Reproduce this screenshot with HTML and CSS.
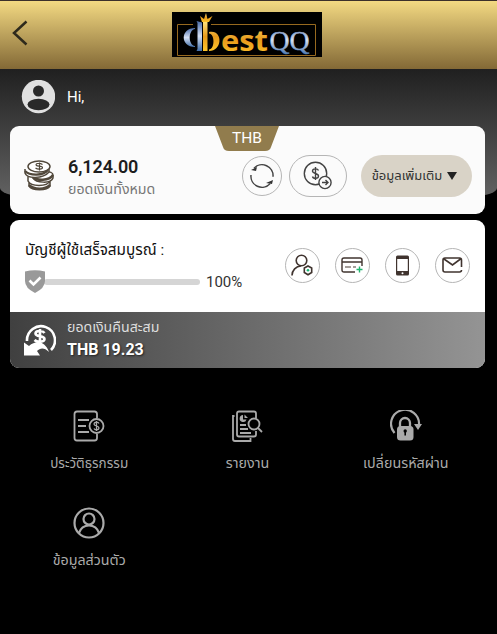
FILE: index.html
```html
<!DOCTYPE html>
<html lang="th">
<head>
<meta charset="utf-8">
<title>BestQQ</title>
<link rel="stylesheet" href="styles.css">
</head>
<body>
<header class="topbar">
  <svg class="back" width="16" height="26" viewBox="0 0 16 26"><path d="M14.500 1.500 2 13l12.500 11.500" fill="none" stroke="#2e2a1c" stroke-width="2.500"/></svg>
  <svg class="logo" width="150" height="45" viewBox="0 0 150 45">
    <defs>
      <linearGradient id="gold" x1="0" y1="0" x2="0" y2="1"><stop offset="0" stop-color="#ffe27a"/><stop offset=".5" stop-color="#e79a1c"/><stop offset="1" stop-color="#ffc62b"/></linearGradient>
      <linearGradient id="blue" x1="0" y1="0" x2="0" y2="1"><stop offset="0" stop-color="#4769a6"/><stop offset=".5" stop-color="#d5e0f5"/><stop offset="1" stop-color="#416fa9"/></linearGradient>
    </defs>
    <path fill="#000" d="M0 0h150v45H0z"/>
    <path d="M21 12.500H5.500v31h138v-31H39" fill="none" stroke="#97691f"/>
    <path d="M23 16c-15 0-15 19 0 19v-1c-7-1-7-16 0-17z" fill="url(#blue)"/>
    <path d="M24.500 9l5.500 1.500V39h-5.500l1-2V11z" fill="url(#blue)"/>
    <path d="M31 10h4.500v29H31zM37 20c14-3 14 19 0 19v-1.500c6 0 6-16 0-16z" fill="url(#gold)"/>
    <path d="m30 10-2-6 4 3 2-6 1.500 6 5-3-3.500 6z" fill="url(#gold)"/>
    <text class="logo-best" x="49" y="38.500" textLength="47" lengthAdjust="spacingAndGlyphs" fill="url(#gold)">est</text>
    <text class="logo-qq" x="97.500" y="37.500" textLength="40" lengthAdjust="spacingAndGlyphs" fill="url(#blue)" stroke="url(#blue)" stroke-width=".5">QQ</text>
  </svg>
</header>
<section class="hero">
  <svg width="34" height="34" viewBox="0 0 34 34"><circle cx="17.500" cy="16.500" r="16.700" fill="#e0e0e0"/><circle cx="17.500" cy="11" r="5.500" fill="#292929"/><ellipse cx="17.500" cy="24.500" rx="11" ry="5.700" fill="#292929"/></svg>
  <span>Hi,</span>
</section>
<main>
  <section class="card balance">
    <span class="currency">THB</span>
    <svg class="coins" width="31" height="31" viewBox="0 0 31 31" fill="#fff" stroke="#51483b" stroke-width="1.500">
      <path d="M5 22v4c3 5 18 5 21 0v-4M4 17v4c3 6 19 6 22 0v-5"/>
      <path d="M5 25c5 5 16 5 21 0" stroke-width="2.500" fill="none"/>
      <path d="M9 14c1-4 20-4 20 1v3c-2 6-17 5-20 0z"/><path d="M9 17c4 4 16 4 20-2" stroke-width="2.500"/>
      <path d="M1 9v4c2 6 18 6 24-1V7"/><path d="M1 11c5 5 18 5 23-1" fill="none" stroke-width="2.300"/>
      <ellipse cx="15" cy="6.500" rx="11" ry="5.500"/><path d="M18.500 4.500c-3-2-8-1-6 1 1 1 6 0 6 2s-5 2-7 .5M15.500 2.500v8" stroke-width="1.200" fill="none"/>
    </svg>
    <div class="amounts"><strong>6,124.00</strong><span>ยอดเงินทั้งหมด</span></div>
    <div class="round refresh"><svg width="26" height="26" viewBox="0 0 26 26"><path d="M5 5.300a11 11 0 0 1 19 8.500M21 20.700A11 11 0 0 1 2 12" fill="none" stroke="#444" stroke-width="1.500"/><path d="m2 7 6-3-1 4zm22 10-1 4-6-1z" fill="#333"/></svg></div>
    <div class="round transfer"><svg width="30" height="30" viewBox="0 0 30 30" fill="none" stroke="#444" stroke-width="1.400"><circle cx="12.500" cy="12.500" r="11.200"/><path d="M15.500 9.500c-1-2.500-6-2-6 .5 0 3 6 2 6 5 0 3-5.500 3-6 .5M12.500 6v13"/><circle cx="22" cy="21.500" r="6.100" fill="#fbfbfb"/><path d="M19 21.500h6m-2.500-2.500 2.500 2.500-2.500 2.500"/></svg></div>
    <button class="more"><span>ข้อมูลเพิ่มเติม</span><i></i></button>
  </section>
  <section class="card profile">
    <div class="complete">
      <div class="progress-col">
        <p>บัญชีผู้ใช้เสร็จสมบูรณ์ :</p>
        <div class="progress">
          <svg width="20" height="23" viewBox="0 0 20 23"><path d="M0 1.500Q10-1 20 1.500V11q0 7-10 12Q0 18 0 11z" fill="#999"/><path d="m4.500 10.500 4 4 7-7" fill="none" stroke="#fff" stroke-width="2.600"/></svg>
          <div class="track"></div><span>100%</span>
        </div>
      </div>
      <div class="actions">
        <div class="round small"><svg width="23" height="23" viewBox="0 0 23 23" fill="none" stroke="#40342f" stroke-width="1.600"><circle cx="10.500" cy="6.500" r="5.300"/><path d="M1 21.500c0-5 4-9.500 9-9.500"/><path d="m17 12 3.700 2v4.500L17 20.700l-3.700-2.200V14z"/><circle cx="17" cy="16.300" r="1.300" fill="#19b575" stroke="none"/></svg></div>
        <div class="round small"><svg width="23" height="23" viewBox="0 0 23 23" fill="none" stroke="#40342f" stroke-width="1.400"><path d="M14 18H3q-2 0-2-2V6q0-2 2-2h16q2 0 2 2v6M1 8h20"/><path d="M4 13h6m2 0h3" stroke="#887f79"/><path d="M18.500 12.500v6m-3-3h6" stroke="#20b66f"/></svg></div>
        <div class="round small"><svg width="23" height="23" viewBox="0 0 23 23"><rect x="5" y="1.500" width="13" height="20" rx="1.500" fill="#40342f"/><path d="M6.200 5h10.600v12H6.200z" fill="#fff"/><circle cx="11.500" cy="19.200" r="1" fill="#fff"/></svg></div>
        <div class="round small"><svg width="23" height="23" viewBox="0 0 23 23" fill="none" stroke="#40342f" stroke-width="1.600"><path d="M20.500 13V6q0-2-2-2H4Q2 4 2 6v10q0 2 2 2h14.500q2 0 2-2M3 5l8.500 6L19.500 5"/></svg></div>
      </div>
    </div>
    <div class="rebate">
      <svg width="32" height="32" viewBox="0 0 32 32"><path d="M3 17A14 14 0 1 1 27 26" fill="none" stroke="#fff" stroke-width="2.600"/><path d="M20.500 9c-2-3-9-2.500-9 .5 0 4 9 1.500 9 5.500 0 3-7 4-10 1M16 5v13" fill="none" stroke="#fff" stroke-width="2.600"/><path d="M0 18.500 5 22c7-6 16-5 20 6-5-5-9-4-12-1l3 4.500H0z" fill="#fff"/></svg>
      <div><span>ยอดเงินคืนสะสม</span><strong>THB 19.23</strong></div>
    </div>
  </section>
  <nav>
    <a><svg width="32" height="32" viewBox="0 0 32 32"><path d="M24 8V4q0-2.500-2.500-2.500H4Q1.500 1.500 1.500 4v24q0 2.500 2.500 2.500h17.500q2.500 0 2.500-2.500v-4M5 10h11M5 16h8M5 22h11"/><circle cx="23.500" cy="16" r="7"/><path d="M26 13.500c-1-2-5-1.500-5 .5 0 2.500 5 1.500 5 4 0 2-4 2.500-5 .5M23.500 11v10" stroke-width="1.300"/></svg><span class="tight">ประวัติธุรกรรม</span></a>
    <a><svg width="32" height="32" viewBox="0 0 32 32"><path d="M25 8V3.500q0-2-2-2H8q-2 0-2 2v21q0 2 2 2h15q2 0 2-2V21M3.500 6H2v23q0 2 2 2h15.500v-3M9 15h6M9 19h8M9 23h11"/><circle cx="23" cy="14" r="5.500"/><path d="m27 18 4 4"/><path d="M12 5a3.500 3.500 0 1 0 3.500 4.500H12zM13.500 4.500V8H17z" fill="#aaa" stroke="none"/></svg><span>รายงาน</span></a>
    <a><svg width="32" height="32" viewBox="0 0 32 32"><path d="M4.500 23A14 14 0 1 1 29 15" stroke-width="2.200"/><path d="M24 14h8l-4 6z" fill="#aaa" stroke="none"/><path d="M10 17v-4a5 5 0 0 1 10 0v4" stroke-width="2.300"/><rect x="7" y="16" width="16.500" height="14.500" rx="3.500" fill="#aaa" stroke="none"/><path d="M15.200 21v4.500" stroke="#000" stroke-width="1.600"/><circle cx="15.200" cy="21" r="1.700" fill="#000" stroke="none"/></svg><span>เปลี่ยนรหัสผ่าน</span></a>
    <a><svg class="person" width="32" height="32" viewBox="0 0 32 32"><circle cx="16" cy="16" r="14.500"/><circle cx="16" cy="12" r="5.500"/><path d="M6 26q2.500-7.500 10-7.500T26 26"/></svg><span>ข้อมูลส่วนตัว</span></a>
  </nav>
</main>
</body>
</html>
```
FILE: styles.css
```css
* { box-sizing: border-box; }
body { margin: 0; height: 634px; overflow: hidden; background: #000; color: #fff; font-family: Roboto, "Noto Sans Thai", "Noto Sans", sans-serif; }
svg { display: block; flex: none; }
p { margin: 0; }
span { white-space: nowrap; }
.topbar { height: 69px; padding: 12px 175px 0 12px; display: flex; justify-content: space-between; align-items: flex-start; border-top: 1px solid #3c302a; background: linear-gradient(#f3d982, #836936); }
.topbar .back { margin-top: 7px; }
.topbar .logo { margin-top: -1px; }
.logo-best { font: 700 28px "Open Sans", sans-serif; }
.logo-qq { font: 28px "Liberation Serif", serif; }
.hero { height: 127px; padding: 11px 21px; display: flex; gap: 12px; font-size: 15px; line-height: 34px; background: linear-gradient(#202020, #616161); border-radius: 0 0 24px 24px / 0 0 8px 8px; }
main { margin: -70px 12px 0 10px; }
.card { border-radius: 9px; overflow: hidden; }
.balance { position: relative; height: 88px; padding: 12px 13px 0 14px; display: flex; align-items: center; background: #fbfbfb; }
.currency { position: absolute; left: 205px; top: 0; width: 64px; height: 25px; line-height: 24px; font-size: 15.5px; text-align: center; background: #917c4d; clip-path: path("M0 0H64L56 21Q55 25 50 25H14Q9 25 8 21Z"); }
.coins { margin-top: -2px; }
.amounts { width: 174px; margin-left: 13px; padding-top: 4px; display: flex; flex-direction: column; color: #1d1d1d; }
.amounts strong { font-size: 18px; line-height: 22px; font-weight: 600; letter-spacing: -.1px; }
.amounts span { color: #777; font-size: 14.2px; line-height: 22px; }
.round { flex: none; display: flex; align-items: center; justify-content: center; border: 1px solid #b5b5b5; border-radius: 30px; }
.refresh { width: 40px; height: 40px; }
.transfer { width: 58px; height: 42px; margin-left: 7px; }
.more { width: 111px; height: 42px; margin-left: 14px; padding: 0 4px 0 0; border: 0; border-radius: 21px; background: #d9d3c7; color: #333; font: 13px Roboto, "Noto Sans Thai", sans-serif; display: flex; align-items: center; justify-content: center; gap: 5px; }
.more i { border: 5px solid transparent; border-top: 8px solid #222; border-bottom: 0; }
.profile { height: 148px; margin-top: 6px; background: #fff; }
.complete { height: 92px; padding: 0 15px; display: flex; justify-content: space-between; color: #333; }
.progress-col { padding-top: 19px; font-size: 15.3px; }
.progress-col p { height: 22px; line-height: 22px; color: #111; white-space: nowrap; }
.progress { display: flex; align-items: center; margin-top: 9px; }
.progress svg { z-index: 1; }
.track { width: 156px; height: 6px; margin-left: -1px; border-radius: 3px; background: #d5d5d5; }
.progress span { margin-left: 6px; font-size: 15px; }
.actions { display: flex; gap: 15px; padding-top: 28px; }
.small { width: 35px; height: 35px; }
.rebate { height: 56px; padding-left: 14px; display: flex; align-items: center; gap: 11px; background: linear-gradient(90deg, #404040, #949494); }
.rebate div { display: flex; flex-direction: column; }
.rebate span { font-size: 14.2px; line-height: 20px; margin-top: -2px; color: #ddd; }
.rebate strong { font-size: 16px; line-height: 25px; text-shadow: 1px 1px 2px #222; }
nav { margin-top: 42px; display: grid; grid-template-columns: repeat(3, 1fr); grid-auto-rows: 97px; }
nav a { display: flex; flex-direction: column; align-items: center; color: #aaa; font-size: 14.3px; }
nav svg { fill: none; stroke: #aaa; stroke-width: 1.8; }
nav .person { stroke-width: 2.2; }
nav span { margin-top: 11px; line-height: 20px; }
nav .tight { font-size: 13.5px; }
```
